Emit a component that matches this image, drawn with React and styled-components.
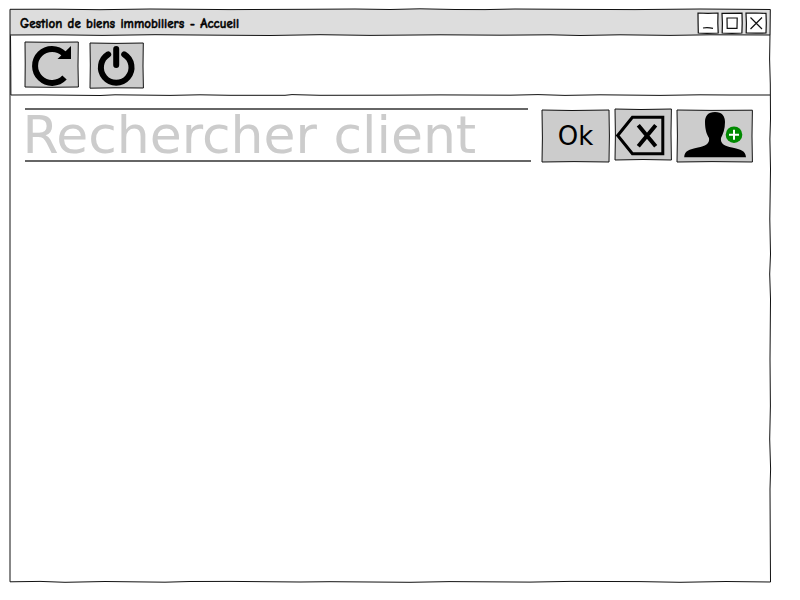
import React from "react";
import styled, { createGlobalStyle } from "styled-components";

const GlobalStyle = createGlobalStyle`
  *, *::before, *::after { box-sizing: border-box; }
  body { margin: 0; background: #fff; }
`;

const Page = styled.main`
  width: 800px;
  height: 600px;
  padding: 9px 0 0 10px;
  overflow: hidden;
  background: #fff;
`;

const Window = styled.section`
  position: relative;
  display: flex;
  flex-direction: column;
  width: 761px;
  height: 573px;
`;

const TitleBar = styled.header`
  position: relative;
  display: flex;
  align-items: center;
  justify-content: space-between;
  height: 26px;
  padding: 1px 5px 0 10px;
  background: #ddd;
`;

const Title = styled.h1`
  margin: 0;
  padding-top: 2px;
  font: 700 13px/24px "Comic Neue", "Comic Sans MS", "Open Sans", sans-serif;
  word-spacing: 0.7px;
  color: #000;
  -webkit-text-stroke: 0.4px #000;
  white-space: nowrap;
`;

const WindowControls = styled.div`
  display: flex;
  gap: 4px;
  padding-top: 1px;
`;

const ControlButton = styled.button`
  position: relative;
  width: 20px;
  height: 20px;
  padding: 0;
  border: 0;
  background: #fff;
`;

const Toolbar = styled.nav`
  position: relative;
  display: flex;
  align-items: flex-start;
  gap: 12px;
  height: 60px;
  padding: 7px 15px;
`;

const SearchRow = styled.form`
  display: flex;
  align-items: flex-start;
  padding: 13px 0 0 15px;
`;

const SearchField = styled.div`
  position: relative;
  width: 506px;
  height: 54px;
  margin-right: 11px;
`;

const SearchInput = styled.input`
  display: block;
  width: 100%;
  height: 54px;
  padding: 0;
  border: 0;
  outline: 0;
  background: transparent;
  font: 52px/54px "DejaVu Sans", sans-serif;
  text-indent: -2.6px;
  color: #000;
  &::placeholder { color: #ccc; opacity: 1; }
`;

const SearchActions = styled.div`
  display: flex;
  gap: 6px;
  padding-top: 1px;
`;

const SketchButton = styled.button`
  position: relative;
  flex: none;
  width: ${(p) => p.$w}px;
  height: ${(p) => p.$h}px;
  margin: ${(p) => p.$drop || 0}px 0 0;
  padding: 0;
  border: 0;
  background: #ccc;
  color: #000;
  font: 26px/${(p) => p.$h}px "DejaVu Sans", sans-serif;
`;

const Drawing = styled.svg`
  position: absolute;
  inset: 0;
  width: 100%;
  height: 100%;
  overflow: visible;
  pointer-events: none;
`;

const Ink = styled.path`
  fill: none;
  stroke: #111;
  stroke-width: ${(p) => p.$weight || 1};
`;

function Outline({ d, weight }) {
  return (
    <Drawing aria-hidden="true">
      <Ink d={d} $weight={weight} />
    </Drawing>
  );
}

function RefreshIcon() {
  return (
    <Drawing aria-hidden="true">
      <path d="M39.2 12A17 17 0 1 0 39.5 35.5" fill="none" stroke="#000" strokeWidth="6" />
      <path d="M46 4V17H32.5Z" />
    </Drawing>
  );
}

function PowerIcon() {
  return (
    <Drawing aria-hidden="true">
      <path d="M18.2 11.4A15.3 15.3 0 1 0 34.2 11.4M26.2 6V22" fill="none" stroke="#000" strokeWidth="6" strokeLinecap="round" />
    </Drawing>
  );
}

function EraseIcon() {
  return (
    <Drawing aria-hidden="true">
      <path d="M2.7 26.5L17.4 8.3H47.8V44.7H17.4Z" fill="none" stroke="#000" strokeWidth="3" />
      <path d="M23.3 16.3L40.7 37.3M40.7 16.3L23.3 37.3" fill="none" stroke="#000" strokeWidth="4" />
    </Drawing>
  );
}

function AddPersonIcon() {
  return (
    <Drawing aria-hidden="true">
      <path d="M38 2C31 2 28 6 28 12C28 20 30 25 32 28C33 34 28 36 21 37.6C12 39.5 7.5 41 7.2 47.2H69C68.5 41 64 39.5 55 37.6C48 36 43 34 44 28C46 24 48 19 48 12C48 6 45 2 38 2Z" />
      <circle cx="57" cy="24.7" r="8.3" fill="#008a00" />
      <path d="M52 24.7H62M57 19.7V29.7" stroke="#fff" strokeWidth="2" />
    </Drawing>
  );
}

export default function App() {
  return (
    <Page>
      <GlobalStyle />
      <Window>
        <TitleBar>
          <Title>Gestion de biens immobiliers - Accueil</Title>
          <WindowControls>
            <ControlButton aria-label="Réduire">
              <Outline weight={1.2} d="M0 0L10 .4L20 0L19.8 10L20.2 20L9 20.3L.3 20L.1 10ZM5 15Q10 14.2 15 15.4" />
            </ControlButton>
            <ControlButton aria-label="Agrandir">
              <Outline weight={1.2} d="M0 .3L20 .2L20.2 10L19.9 20L10 20.3L.2 20L.4 10ZM5 5H15.2L15 15.3H5.2Z" />
            </ControlButton>
            <ControlButton aria-label="Fermer">
              <Outline weight={1.2} d="M0 .2L10 0L20 .4L20.3 10L20 20L10 20.2L.2 20L.4 10ZM4.5 4.5L16 16M16 4.5L4.5 16" />
            </ControlButton>
          </WindowControls>
        </TitleBar>
        <Toolbar>
          <SketchButton $w={53} $h={45} aria-label="Actualiser">
            <Outline d="M0 0L26 .3L53.3 0L53 24L53.4 45L25 45.3L0 45L.2 22Z" />
            <RefreshIcon />
          </SketchButton>
          <SketchButton $w={53} $h={45} $drop={1} aria-label="Quitter">
            <Outline d="M0 0L26 .4L53.3 0L53 23L53.4 45L25 44.8L0 45.2L.3 22Z" />
            <PowerIcon />
          </SketchButton>
          <Outline d="M.5 .5Q.8 30 .9 60L30 59.9L90 60.5L105 59.8L160 60.4L190 59.8L220 60.3L275 60.3L282 59.6L310 60.3L380 60.2L430 59.9L500 60.2L528 59.6L555 60.4L590 59.8L650 60.4L690 59.8L720 60L760 60" />
        </Toolbar>
        <SearchRow onSubmit={(event) => event.preventDefault()}>
          <SearchField>
            <SearchInput placeholder="Rechercher client" aria-label="Rechercher client" />
            <Drawing aria-hidden="true">
              <path d="M0 1H503M0 53H506" fill="none" stroke="#666" strokeWidth="2" />
            </Drawing>
          </SearchField>
          <SearchActions>
            <SketchButton $w={67} $h={52} $drop={1} type="submit">
              Ok
              <Outline d="M0 0L30 .5L67 0L67.4 26L67 52L32 51.6L0 52L.4 28Z" />
            </SketchButton>
            <SketchButton $w={56} $h={51} type="button" aria-label="Effacer">
              <Outline d="M0 0L26 .5L56.4 0L56 24L56.4 51L28 50.5L0 51L.4 26Z" />
              <EraseIcon />
            </SketchButton>
            <SketchButton $w={75} $h={52} $drop={1} type="button" aria-label="Ajouter un client">
              <Outline d="M0 0L34 .4L75.4 .2L75 26L75.4 52L35 51.6L0 52L.4 26Z" />
              <AddPersonIcon />
            </SketchButton>
          </SearchActions>
        </SearchRow>
        <Outline d="M0 .3L45 .2L90 .7L140 0L220 .6L295 .3L345 0L380 .5L410 -.2L445 .5L475 .6L505 0L570 .4L625 .6L690 0L760.3 .5L760 25L759.6 50L760.3 75L760.5 110L759.9 130L760.5 160L759.8 210L760.5 245L759.7 265L760.5 290L760 350L760.4 397L759.7 430L760.6 460L760 480L760.5 573L716 572.5L670 573.3L630 572.6L560 572.4L520 573.1L440 572.6L400 573.3L320 572.7L290 573L220 572.4L180 572.5L155 573.2L95 572.5L55 573.3L30 572.4L0 572.8L0 300ZM0 26L45 25.8L92 26.4L145 25.7L210 26.2L260 26.5L310 25.7L360 26.4L430 25.8L490 26.2L540 25.8L570 26.5L610 25.8L660 26.4L700 25.8L760 26" />
      </Window>
    </Page>
  );
}
